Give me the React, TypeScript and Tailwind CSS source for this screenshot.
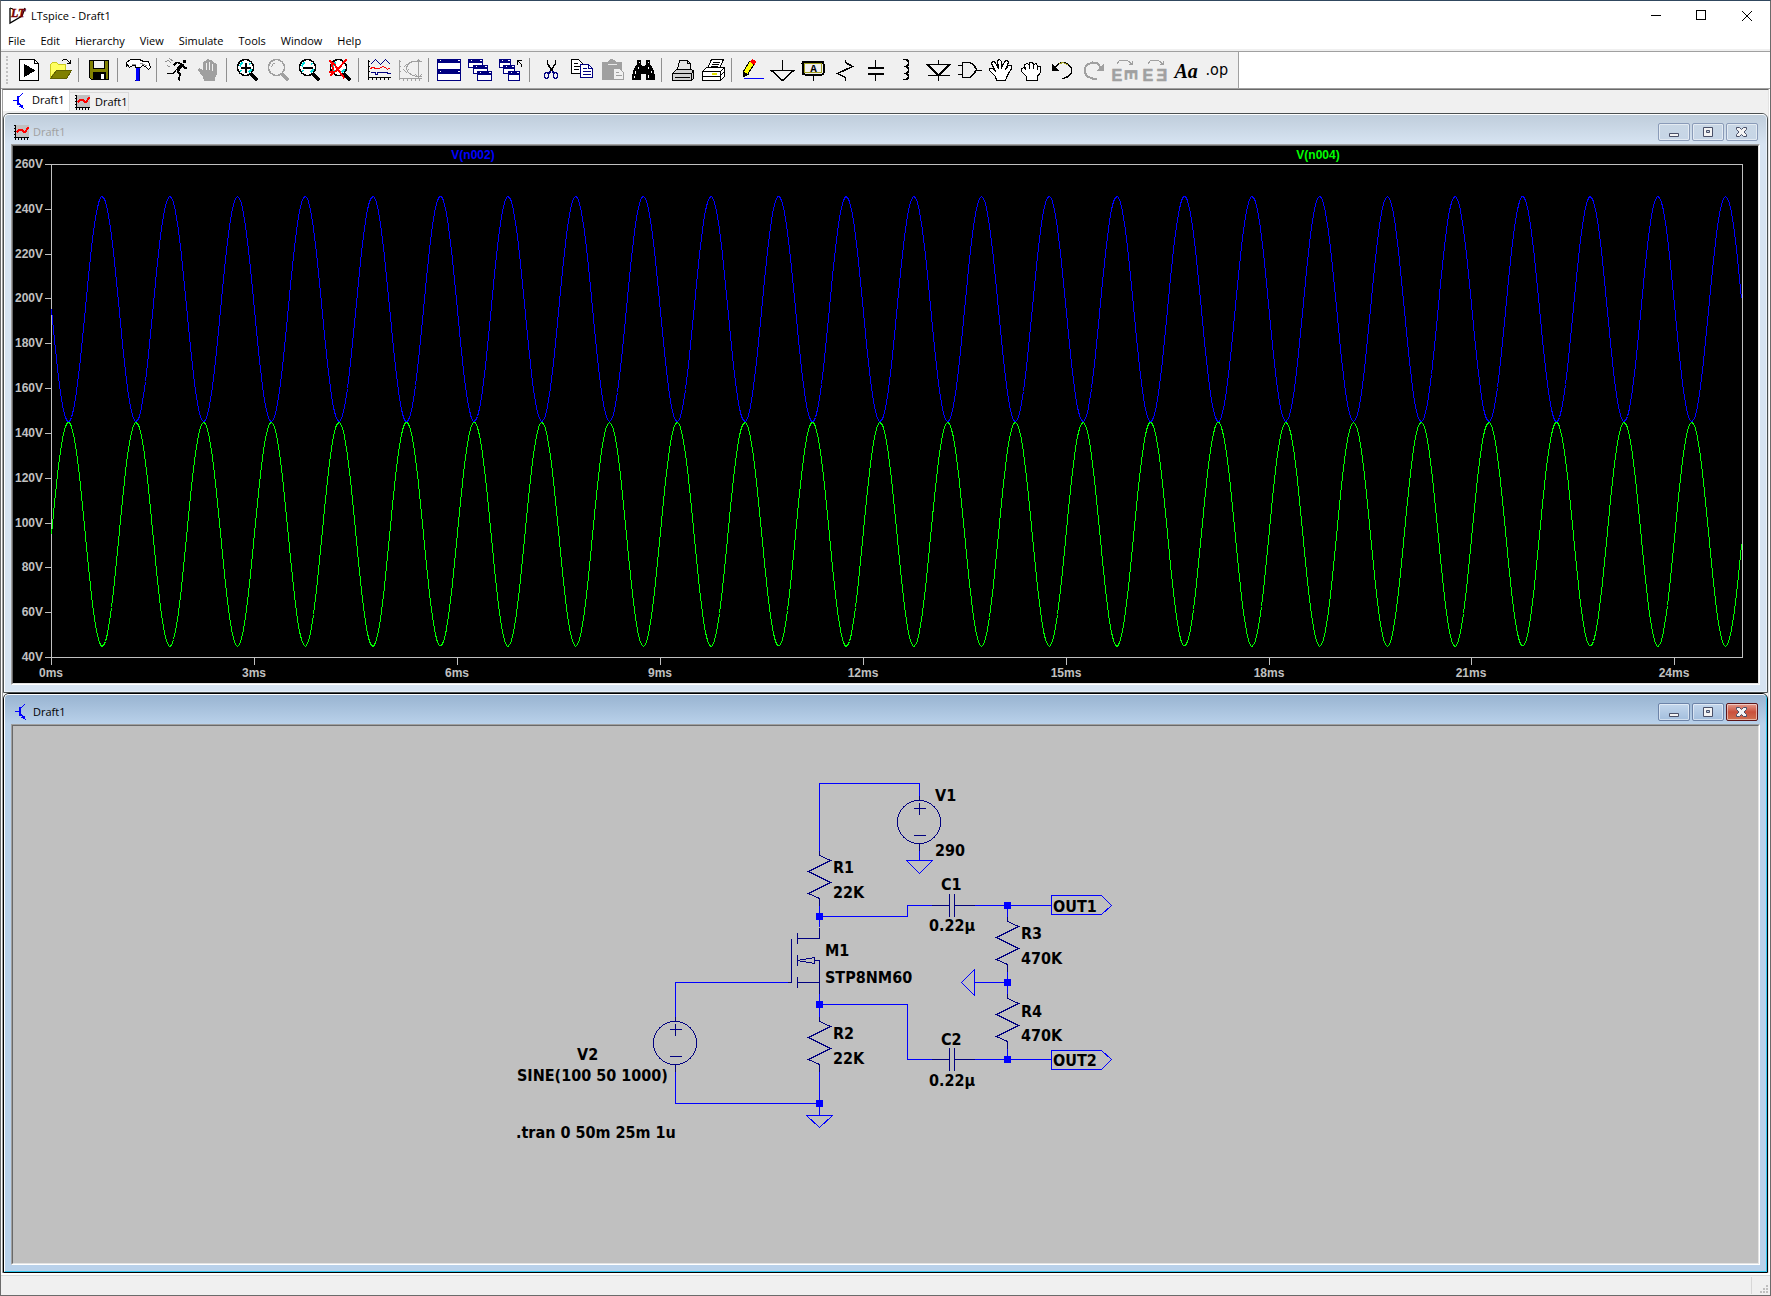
/**
 * LTspice main window
 * Menu + toolbar on top, two MDI children below: waveform viewer and schematic
 */

import type { ReactNode } from "react";

const MENUS = ["File", "Edit", "Hierarchy", "View", "Simulate", "Tools", "Window", "Help"];

/* ---------- small drawings ---------- */

function Icon({ children, w = 24, h = 24 }: { children: ReactNode; w?: number; h?: number }) {
  return (
    <svg
      width={w}
      height={h}
      viewBox={`0 0 ${w} ${h}`}
      shapeRendering="crispEdges"
      fill="none"
      stroke="#000"
      className="shrink-0 overflow-visible"
      aria-hidden="true"
    >
      <g transform="translate(.5 .5)">{children}</g>
    </svg>
  );
}

function TransistorIcon() {
  return (
    <svg width="16" height="16" viewBox="0 0 16 16" shapeRendering="crispEdges" fill="#00f" className="shrink-0" aria-hidden="true">
      <path d="M2 7h4v1h-4zM6 3h2v9h-2z" />
      <path d="M8 3h1v1h-1zM9 2h1v1h-1zM10 1h1v1h-1zM11 0h1v1h-1z" />
      <path d="M8 10h1v2h-1zM9 11h1v2h-1zM10 12h1v3h-1zM11 12h1v3h-1zM8 13h2v1h-2zM12 15h1v1h-1z" />
    </svg>
  );
}

function PlotIcon() {
  return (
    <Icon w={16} h={16}>
      <rect x="2" y="0" width="13" height="12" fill="#c0c0c0" stroke="none" />
      <path d="M2 0V15M0 1H2M0 4H2M0 7H2M0 10H2M0 13H15M5 13V15M8 13V15M11 13V15M14 13V15" />
      <path d="M3 8L6 5L8 5L10 7L12 7L15 3" stroke="#f00" strokeWidth="2" />
    </Icon>
  );
}

function Lens({ color = "#000", children }: { color?: string; children?: ReactNode }) {
  const live = color === "#000";
  return (
    <>
      <circle cx="10" cy="9" r="8" fill={live ? "#fff" : "none"} stroke={color} strokeWidth="1.500" />
      {live && <path d="M4 8L7 4M13 14L16 11M5 12L6 13M14 5L15 6" stroke="#00e0e0" strokeWidth="2" />}
      {!live && <path d="M5 9L6 6L9 4" stroke={color} />}
      <path d="M15 15L22 22" stroke={color} strokeWidth="3.500" />
      {children}
    </>
  );
}

function MiniWindow({ x, y, w, h }: { x: number; y: number; w: number; h: number }) {
  return (
    <g stroke="#000080">
      <rect x={x} y={y} width={w} height={h} fill="#fff" />
      <rect x={x} y={y} width={w} height="3" fill="#000080" />
      <path d={`M${x + w - 3} ${y + 1}h2M${x + 2} ${y + 1}h1`} stroke="#fff" />
    </g>
  );
}

const OPEN_HAND =
  "M8 22L7 18L1 12L1 10L4 10L7 13L3 5L4 3L6 3L10 10L9 2L11 1L13 3L13 9L17 2L19 2L20 4L17 11L20 7L23 7L23 10L20 15L18 19L17 22Z";

type Tool = { label: string; art: ReactNode; off?: boolean };

const TOOLS: Tool[][] = [
  [
    {
      label: "New Schematic",
      art: (
        <>
          <path d="M2 1H17L21 5V22H2Z" fill="#fff" />
          <path d="M17 1V5H21" />
          <path d="M7 6L17 12L7 18Z" fill="#000" />
        </>
      ),
    },
    {
      label: "Open",
      art: (
        <>
          <path d="M2 19V6L4 4H8L10 6H17V12H8Z" fill="#ffff60" stroke="#c8c820" />
          <path d="M2 20L8 12H23L18 20Z" fill="#808000" stroke="#606000" />
          <path d="M13 3L15 1H18L22 5M22 1V5H18" />
        </>
      ),
    },
  ],
  [
    {
      label: "Save",
      art: (
        <>
          <path d="M2 2H21V21H4L2 19Z" fill="#808000" />
          <rect x="6" y="2" width="11" height="8" fill="#f0f0f0" />
          <rect x="6" y="14" width="12" height="7" fill="#000" />
          <rect x="14" y="16" width="2" height="4" fill="#fff" stroke="#fff" />
        </>
      ),
    },
  ],
  [
    {
      label: "Control Panel",
      art: (
        <>
          <path d="M0 8V4L4 1H13L17 3H22L24 9L22 11L19 8L16 7L14 9H9V7H6L3 9L1 6Z" fill="#fff" />
          <path d="M5 6H9M14 5L18 6L21 8" stroke="#909090" />
          <path d="M11 9V22" stroke="#0000ff" strokeWidth="4" />
          <path d="M13 10V22M9 21V22" stroke="#000080" strokeWidth="1.500" />
        </>
      ),
    },
  ],
  [
    {
      label: "Run",
      art: (
        <>
          <path d="M18 2H20V4H18Z" fill="#000" />
          <path d="M17 5L12 12" strokeWidth="3.500" />
          <path d="M16 5L11 4L8 7M18 7L19 10L22 9" strokeWidth="1.500" />
          <path d="M11 12L7 15L1 15M12 13L15 16L13 21L15 22" strokeWidth="1.500" />
          <path d="M0 3L3 2L6 5M4 0L8 3M2 7L5 9" stroke="#909090" />
        </>
      ),
    },
    {
      label: "Halt",
      off: true,
      art: (
        <>
          <path
            d="M8 22L7 18L2 12L3 10L7 13V4L9 3L10 4V2L12 1L13 3L15 2L17 4V6L19 5L20 7V16L18 19V22Z"
            fill="#a0a0a0"
            stroke="#a0a0a0"
          />
          <path d="M10 4V11M13 3V11M16 5V12" stroke="#f0f0f0" />
        </>
      ),
    },
  ],
  [
    { label: "Zoom In", art: <Lens><path d="M5 9H15M10 4V14" strokeWidth="2" /></Lens> },
    { label: "Pan", off: true, art: <Lens color="#a0a0a0" /> },
    { label: "Zoom Out", art: <Lens><path d="M5 9H15" strokeWidth="2" /></Lens> },
    {
      label: "Zoom Full",
      art: (
        <Lens>
          <path d="M1 2L6 6L16 20M18 1L9 11L2 17M1 13L6 14M3 5L5 12" stroke="#f00" strokeWidth="2" />
        </Lens>
      ),
    },
  ],
  [
    {
      label: "Autorange",
      art: (
        <>
          <path d="M1 1V21M0 3H2M0 8H2M0 13H2M0 19H23M5 19V21M9 19V21M13 19V21M17 19V21M21 19V21" />
          <path d="M3 6L8 1L13 6L18 1L23 6M3 14H8V16H10V14H20V15H23" stroke="#000080" />
          <path d="M3 10L5 9L9 10H12L15 8L18 9L20 11L23 9" stroke="#f00" />
        </>
      ),
    },
    {
      label: "Nyquist",
      off: true,
      art: (
        <g stroke="#a0a0a0">
          <path d="M1 1V21M0 3H2M0 8H2M0 13H2M0 20H23M5 20V22M9 20V22M13 20V22M17 20V22M21 20V22" />
          <path d="M23 3H20L14 3L10 5L8 9V11L10 14L14 17L19 18H23M20 1V19M17 4L20 1L23 4M17 16L20 19L23 16M5 9L8 6L10 9M5 11L8 14L10 11" />
        </g>
      ),
    },
  ],
  [
    {
      label: "Tile Windows",
      art: (
        <>
          <MiniWindow x={0} y={1} w={23} h={10} />
          <MiniWindow x={0} y={12} w={23} h={10} />
        </>
      ),
    },
    {
      label: "Cascade Windows",
      art: (
        <>
          <MiniWindow x={0} y={1} w={14} h={8} />
          <MiniWindow x={5} y={7} w={14} h={8} />
          <MiniWindow x={9} y={13} w={14} h={9} />
        </>
      ),
    },
    {
      label: "Close All",
      art: (
        <>
          <MiniWindow x={0} y={1} w={11} h={8} />
          <MiniWindow x={4} y={7} w={11} h={8} />
          <MiniWindow x={9} y={13} w={11} h={9} />
          <path d="M18 6V2H22M18 2L22 6V8" />
        </>
      ),
    },
  ],
  [
    {
      label: "Cut",
      art: (
        <>
          <path d="M9 1V5L14 13M17 1V5L12 13" strokeWidth="1.500" />
          <path d="M12 13L10 15M14 13L16 15" stroke="#000080" strokeWidth="2" />
          <ellipse cx="8" cy="17" rx="2" ry="3" stroke="#000080" strokeWidth="1.500" />
          <ellipse cx="17" cy="17" rx="2" ry="3" stroke="#000080" strokeWidth="1.500" />
        </>
      ),
    },
    {
      label: "Copy",
      art: (
        <>
          <path d="M2 1H9L13 5V15H2Z" fill="#fff" />
          <path d="M4 5H8M4 8H11M4 11H9" />
          <path d="M11 6H19L23 10V19H11Z" fill="#fff" stroke="#000080" />
          <path d="M19 6V10H23M13 10H17M13 13H21M13 16H21" stroke="#000080" />
        </>
      ),
    },
    {
      label: "Paste",
      off: true,
      art: (
        <>
          <path d="M2 4H7L9 2L11 1L14 2L16 4H21V21H2Z" fill="#a0a0a0" stroke="#a0a0a0" />
          <path d="M7 6H16" stroke="#e8e8e8" />
          <path d="M13 10H19L23 14V21H13Z" fill="#f0f0f0" stroke="#a0a0a0" />
          <path d="M15 14H18M15 17H21" stroke="#a0a0a0" />
        </>
      ),
    },
    {
      label: "Find",
      art: (
        <>
          <path d="M6 2H9V6L11 8H13L15 6V2H18V6L21 10L23 17V21H15V15H9V21H1V17L3 10L6 6Z" fill="#000" />
          <path d="M4 12V15M3 17V19M7 8V10M17 8V10M17 16V19M20 12V14M8 3V4M17 3V4" stroke="#fff" />
        </>
      ),
    },
  ],
  [
    {
      label: "Print",
      art: (
        <>
          <path d="M7 11L9 2H17L20 5V11" fill="#e4e4e4" />
          <path d="M17 2V5H20" />
          <path d="M2 15L6 11H21L23 13V20L21 22H2Z" fill="#d0d0d0" />
          <path d="M2 15H21V22M21 15L23 12M4 19H19" />
        </>
      ),
    },
    {
      label: "Print Setup",
      art: (
        <>
          <path d="M6 10L10 1H22L18 10Z" fill="#fff" />
          <path d="M11 4H18M10 6H17M9 8H16" />
          <path d="M1 13L5 9H22L23 11V18L19 22H1Z" fill="#fff" />
          <path d="M1 13H19V22M19 13L23 9M1 18H19M19 17L23 13" />
          <path d="M10 15H15" stroke="#e0e000" strokeWidth="2" />
        </>
      ),
    },
  ],
  [
    {
      label: "Wire",
      art: (
        <>
          <path d="M3 13L9 3L14 5L7 16L3 18Z" fill="#ff0" />
          <path d="M10 3L12 1L15 3L14 6Z" fill="#f00" stroke="#f00" />
          <path d="M3 14L3 18L7 16Z" fill="#000" />
          <path d="M3 20H23" stroke="#00f" />
        </>
      ),
    },
    { label: "Ground", art: <path d="M11 1V12M0 12H22L11 22Z" strokeWidth="1.500" /> },
    {
      label: "Label Net",
      art: (
        <>
          <rect x="0" y="3" width="21" height="13" rx="2" strokeWidth="2" />
          <path d="M2 5H19V14H2Z" stroke="#a0a020" />
          <path d="M11 16V22" />
          <text x="11" y="13" textAnchor="middle" fontSize="11" fill="#000" stroke="none" className="font-['Liberation_Mono',monospace] font-bold">A</text>
        </>
      ),
    },
    { label: "Resistor", art: <path d="M12 1V4L19 8L4 15L12 19V22" strokeWidth="1.500" /> },
    {
      label: "Capacitor",
      art: (
        <>
          <path d="M11 1V9M11 16V22" strokeWidth="1.500" />
          <path d="M3 9.500H19M3 15.500H19" strokeWidth="2" />
        </>
      ),
    },
    { label: "Inductor", art: <path d="M7 1H11L13 3V6L11 8H8M11 8L13 10V13L11 15H8M11 15L13 17V19L11 21H7" strokeWidth="1.500" /> },
    { label: "Diode", art: <path d="M12 1V6M1 6H23L12 17ZM1 17H23M12 17V22" strokeWidth="1.500" /> },
    { label: "Component", art: <path d="M5 4H12L16 6L19 11L16 16L12 19H5ZM0 7H5M0 16H5M19 12H24" strokeWidth="1.500" /> },
    { label: "Move", art: <path d={OPEN_HAND} fill="#fff" strokeWidth="1.200" /> },
    {
      label: "Drag",
      art: (
        <>
          <path
            d="M7 22V18L2 13V10L5 9L6 11L5 6L8 5L10 7V4L13 4L14 6L17 5L18 8L21 8V14L18 18V22Z"
            fill="#fff"
            strokeWidth="1.200"
          />
          <path d="M10 6V10M14 6V10M18 8V11" />
        </>
      ),
    },
    {
      label: "Undo",
      art: (
        <>
          <path d="M3 11L8 5L13 4L18 6L21 10V14L18 18L13 20L11 20" strokeWidth="1.500" />
          <path d="M9 5L13 4L18 7" stroke="#a0a020" />
          <path d="M2 6V12H8Z" fill="#000" />
        </>
      ),
    },
    {
      label: "Redo",
      off: true,
      art: (
        <g stroke="#a0a0a0">
          <path d="M20 10L16 5L11 4L6 6L3 10V14L6 18L11 20L15 20" strokeWidth="2" />
          <path d="M22 6V12H16Z" fill="#a0a0a0" />
        </g>
      ),
    },
    {
      label: "Rotate",
      off: true,
      art: (
        <>
          <path d="M4 6L7 2H15L20 6M20 2V6H16" stroke="#a0a0a0" />
          <g fill="#a0a0a0" stroke="#a0a0a0" strokeWidth=".6" fontSize="16" className="font-['Liberation_Sans',Arial,sans-serif] font-bold">
            <text x="-1" y="22">E</text>
            <text transform="translate(12 11) rotate(90)">E</text>
          </g>
        </>
      ),
    },
    {
      label: "Mirror",
      off: true,
      art: (
        <>
          <path d="M4 6L7 2H15L20 6M20 2V6H16" stroke="#a0a0a0" />
          <g fill="#a0a0a0" stroke="#a0a0a0" strokeWidth=".6" fontSize="16" className="font-['Liberation_Sans',Arial,sans-serif] font-bold">
            <text x="-1" y="22">E</text>
            <text x="13" y="22">Ǝ</text>
          </g>
        </>
      ),
    },
    {
      label: "Text",
      art: (
        <text x="0" y="19" fontSize="20" fill="#000" stroke="none" className="font-['Liberation_Serif',serif] font-bold italic">Aa</text>
      ),
    },
    {
      label: "SPICE Directive",
      art: (
        <text x="0" y="16" fontSize="16" fill="#000" stroke="none" className="font-['DejaVu_Sans_Condensed','DejaVu_Sans',sans-serif]">.op</text>
      ),
    },
  ],
];

/* ---------- waveform viewer ---------- */

const PLOT = { left: 38, right: 1729, top: 18, bottom: 511 };
const V_MIN = 40;
const V_MAX = 260;
const T_END = 25;

const xAt = (ms: number) => PLOT.left + (ms / T_END) * (PLOT.right - PLOT.left);
const yAt = (v: number) => PLOT.bottom - ((v - V_MIN) / (V_MAX - V_MIN)) * (PLOT.bottom - PLOT.top);

function trace(offset: number, amplitude: number) {
  const points: string[] = [];
  for (let x = PLOT.left; x <= PLOT.right; x += 2) {
    const ms = ((x - PLOT.left) / (PLOT.right - PLOT.left)) * T_END;
    points.push(`${x},${Math.round(yAt(offset + amplitude * Math.sin(2 * Math.PI * ms)))}`);
  }
  return points.join(" ");
}

const V_TICKS = [260, 240, 220, 200, 180, 160, 140, 120, 100, 80, 60, 40];
const T_TICKS = [0, 3, 6, 9, 12, 15, 18, 21, 24];

function Waveforms() {
  return (
    <svg viewBox="0 0 1745 537" className="block h-auto w-full bg-black font-['Liberation_Sans',Arial,sans-serif] text-[12px] font-bold">
      <g transform="translate(.5 .5)" shapeRendering="crispEdges" fill="none">
        <g stroke="#c0c0c0">
          <rect x={PLOT.left} y={PLOT.top} width={PLOT.right - PLOT.left} height={PLOT.bottom - PLOT.top} />
          {V_TICKS.map((v) => (
            <path key={v} d={`M31 ${Math.round(yAt(v))}H38`} />
          ))}
          {T_TICKS.map((t) => (
            <path key={t} d={`M${Math.round(xAt(t))} 511V518`} />
          ))}
        </g>
        <polyline points={trace(195.5, -50.3)} stroke="#0000ff" />
        <polyline points={trace(95, 50)} stroke="#00ff00" />
      </g>
      <g fill="#c0c0c0">
        {V_TICKS.map((v) => (
          <text key={v} x="30" y={Math.round(yAt(v)) + 4} textAnchor="end">{v}V</text>
        ))}
        {T_TICKS.map((t) => (
          <text key={t} x={Math.round(xAt(t))} y="531" textAnchor="middle">{t}ms</text>
        ))}
      </g>
      <text x="460" y="13" textAnchor="middle" fill="#0000ff">V(n002)</text>
      <text x="1305" y="13" textAnchor="middle" fill="#00ff00">V(n004)</text>
    </svg>
  );
}

/* ---------- schematic ---------- */

function Resistor({ x, y }: { x: number; y: number }) {
  return <path d={`M${x} ${y}v5l11 5l-22 11l22 11l-22 11l11 5v7`} stroke="#000080" />;
}

function Source({ x, y }: { x: number; y: number }) {
  return (
    <g stroke="#000080">
      <circle cx={x - 0.5} cy={y - 0.5} r="21.500" />
      <path d={`M${x - 6} ${y - 14}h12M${x} ${y - 20}v12M${x - 6} ${y + 13}h12M${x} ${y - 27}v5M${x} ${y + 21}v7`} />
    </g>
  );
}

function Capacitor({ x, y }: { x: number; y: number }) {
  return <path d={`M${x - 20} ${y}h18M${x - 2} ${y - 12}v23M${x + 3} ${y - 12}v23M${x + 3} ${y}h20`} stroke="#000080" />;
}

const NODES = [[806, 190], [806, 278], [806, 377], [994, 179], [994, 256], [994, 333]];

const LABELS: [number, number, string][] = [
  [922, 75, "V1"],
  [922, 130, "290"],
  [928, 164, "C1"],
  [916, 205, "0.22µ"],
  [1008, 213, "R3"],
  [1008, 238, "470K"],
  [1008, 291, "R4"],
  [1008, 315, "470K"],
  [928, 319, "C2"],
  [916, 360, "0.22µ"],
  [1040, 186, "OUT1"],
  [1040, 340, "OUT2"],
  [820, 147, "R1"],
  [820, 172, "22K"],
  [812, 230, "M1"],
  [812, 257, "STP8NM60"],
  [820, 313, "R2"],
  [820, 338, "22K"],
  [564, 334, "V2"],
  [504, 355, "SINE(100 50 1000)"],
  [503, 412, ".tran 0 50m 25m 1u"],
];

function Schematic() {
  return (
    <svg viewBox="0 0 1745 537" className="block h-auto w-full bg-[#c0c0c0] font-['DejaVu_Sans_Condensed','Open_Sans',sans-serif] text-[16px] font-bold">
      <g transform="translate(.5 .5)" shapeRendering="crispEdges" fill="none">
        {/* wires */}
        <g stroke="#0000ff">
          <path d="M806 124V57H906V70M906 123V134M806 178V200" />
          <path d="M806 190H894V179H918M960 179H1038M994 179V190M994 245V267M994 322V333" />
          <path d="M806 267V290M806 278H894V333H918M960 333H1038" />
          <path d="M662 290V256H774M662 345V377H806M806 345V389M961 256H994" />
          {/* grounds and net flags */}
          <path d="M893 134H919L906 147ZM793 389H819L806 401ZM961 243V269L948 256Z" />
          <path d="M1038 169H1088L1098 179L1088 188H1038ZM1038 324H1088L1098 333L1088 343H1038Z" />
        </g>
        <Source x={906} y={96} />
        <Source x={662} y={317} />
        <Resistor x={806} y={124} />
        <Resistor x={806} y={290} />
        <Resistor x={994} y={190} />
        <Resistor x={994} y={267} />
        <Capacitor x={938} y={179} />
        <Capacitor x={938} y={333} />
        {/* M1 */}
        <path
          d="M806 201V212H784M784 206V217M784 228V239M784 250V261M778 212V256H774M784 256H806M806 267V234H801M784 234L801 231V237Z"
          stroke="#000080"
        />
        {NODES.map(([x, y]) => (
          <rect key={`${x}-${y}`} x={x - 3} y={y - 3} width="6" height="6" fill="#00f" stroke="#00f" />
        ))}
      </g>
      {LABELS.map(([x, y, label]) => (
        <text key={`${x}-${y}`} x={x} y={y}>{label}</text>
      ))}
    </svg>
  );
}

/* ---------- MDI child window ---------- */

const GLYPHS = {
  Minimize: <path d="M1 6H10V9H1Z" />,
  Restore: <path d="M1 0H10V9H1ZM4 3H7V5H4Z" fillRule="evenodd" />,
  Close: <path d="M0 0H3L5 2L7 0H10V2L7.500 4.500L10 7V9H7L5 7L3 9H0V7L2.500 4.500L0 2Z" />,
};

function ChildWindow({ active, icon, children }: { active?: boolean; icon: ReactNode; children: ReactNode }) {
  const edge = active
    ? "border-black bg-[#b9d1ea]"
    : "border-[#4a4f50] bg-[#d7e4f2]";
  const shine = active
    ? "border-t-white border-l-white border-r-[#30c8f0] border-b-[#30c8f0]"
    : "border-t-white border-l-white border-r-[#e8f0f8] border-b-[#e8f0f8]";
  const bar = active ? "from-[#99b4d1] to-[#b9d1ea] text-black" : "from-[#bfcddb] to-[#d7e4f2] text-[#a0a0a0]";
  const button = active ? "border-[#6c83a8] from-[#c3d6ec] to-[#a3bedd]" : "border-[#8a9bb8] from-[#c9d7e5] to-[#c6d5e6]";

  return (
    <section className={`rounded-t-md border ${edge}`}>
      <div className={`rounded-t-[5px] border ${shine}`}>
        <header className={`flex h-[29px] items-start rounded-t-[4px] bg-linear-to-b pt-2 pr-2 pl-2 ${bar}`}>
          <span className="mt-px">{icon}</span>
          <h2 className="ml-1 flex-1 leading-[18px]">Draft1</h2>
          <div className="flex gap-[2px]">
            {(["Minimize", "Restore", "Close"] as const).map((name) => (
              <button
                key={name}
                aria-label={name}
                className={`flex h-[18px] w-8 items-center justify-center rounded-[2px] border bg-linear-to-b shadow-[inset_0_0_0_1px_rgba(255,255,255,0.5)] ${
                  active && name === "Close" ? "border-[#5c1418] from-[#e39a8c] via-[#c9503c] to-[#d07050]" : button
                }`}
              >
                <svg width="12" height="11" viewBox="-0.5 -0.5 12 11" fill="#f4f4f4" stroke="#4a5068" aria-hidden="true">
                  {GLYPHS[name]}
                </svg>
              </button>
            ))}
          </div>
        </header>
        <div className="mx-[6px] mb-[6px] border border-t-[#a0a0a0] border-r-white border-b-white border-l-[#a0a0a0]">
          <div className="border border-t-[#696969] border-r-[#e3e3e3] border-b-[#e3e3e3] border-l-[#696969]">{children}</div>
        </div>
      </div>
    </section>
  );
}

/* ---------- page ---------- */

export default function App() {
  return (
    <div className="flex min-h-screen flex-col border border-t-[#30475f] border-r-[#6b6b6b] border-b-[#6b6b6b] border-l-[#6b6b6b] bg-white font-['Open_Sans','Noto_Sans',sans-serif] text-[11px] text-black">
      {/* title bar */}
      <header className="flex h-[30px] items-center pl-2">
        <svg width="18" height="18" viewBox="0 0 18 18" aria-hidden="true">
          <path d="M1 1V16L13 9L16 1" fill="#fff" stroke="#000" strokeWidth="1.300" />
          <path d="M1 1L4 2" stroke="#000" />
          <text x="2" y="10" fontSize="12" fill="#780000" stroke="#780000" strokeWidth=".4" className="font-['Liberation_Serif',serif] font-bold italic">LT</text>
        </svg>
        <h1 className="ml-1 flex-1">LTspice - Draft1</h1>
        <div className="flex self-stretch">
          <button aria-label="Minimize window" className="flex w-[46px] items-center justify-center">
            <Icon w={12} h={12}><path d="M1 5H11" /></Icon>
          </button>
          <button aria-label="Maximize window" className="flex w-[46px] items-center justify-center">
            <Icon w={12} h={12}><path d="M1 0H10V9H1Z" /></Icon>
          </button>
          <button aria-label="Close window" className="flex w-[46px] items-center justify-center">
            <svg width="12" height="12" viewBox="0 0 12 12" stroke="#000" aria-hidden="true"><path d="M1 1L11 11M11 1L1 11" /></svg>
          </button>
        </div>
      </header>

      <nav className="flex h-5 gap-[15px] border-b-2 border-[#f0f0f0] pl-[7px] leading-[20px]">
        {MENUS.map((m) => (
          <button key={m}>{m}</button>
        ))}
      </nav>

      {/* toolbar */}
      <div className="flex h-[38px] border-t border-b border-t-[#a0a0a0] border-b-[#a0a0a0]">
        <div className="flex items-center border-r border-[#a0a0a0] bg-[#f0f0f0] pr-[6px]" role="toolbar">
          <div className="mr-[4px] ml-[5px] h-7 w-[3px] border-l-2 border-dotted border-[#c0c0c0]" />
          {TOOLS.map((group, i) => (
            <div key={i} className="flex items-center">
              {i > 0 && <div className="mr-1 ml-[3px] h-6 w-px bg-[#909090]" />}
              {group.map((t) => (
                <button key={t.label} aria-label={t.label} disabled={t.off} className="flex w-[31px] justify-center">
                  <Icon>{t.art}</Icon>
                </button>
              ))}
            </div>
          ))}
        </div>
      </div>

      <main className="mx-px flex-1 border-x border-t border-t-[#696969] border-r-[#e3e3e3] border-l-[#a0a0a0] bg-[#f0f0f0]">
        <div role="tablist" className="flex h-[23px] items-start">
          <button role="tab" aria-selected="true" className="flex h-[21px] w-[67px] items-center border-r border-[#d9d9d9] bg-white pl-2">
            <TransistorIcon />
            <span className="ml-[5px]">Draft1</span>
          </button>
          <button role="tab" aria-selected="false" className="mt-[2px] flex h-[19px] w-[59px] items-center border-t border-r border-[#d9d9d9] pl-1">
            <PlotIcon />
            <span className="ml-[5px]">Draft1</span>
          </button>
        </div>
        <ChildWindow icon={<PlotIcon />}>
          <Waveforms />
        </ChildWindow>
        <ChildWindow active icon={<TransistorIcon />}>
          <Schematic />
        </ChildWindow>
      </main>

      {/* status bar */}
      <footer className="mt-[2px] flex h-5 justify-end border-t border-[#d7d7d7] bg-[#f0f0f0]">
        <div className="my-px w-px bg-[#d7d7d7]" />
        <svg width="18" height="19" viewBox="0 0 18 19" fill="#bfbfbf" className="shrink-0" aria-hidden="true">
          <path d="M14 9h2v2h-2zM11 12h2v2h-2zM14 12h2v2h-2zM8 15h2v2h-2zM11 15h2v2h-2zM14 15h2v2h-2z" />
        </svg>
      </footer>
    </div>
  );
}
